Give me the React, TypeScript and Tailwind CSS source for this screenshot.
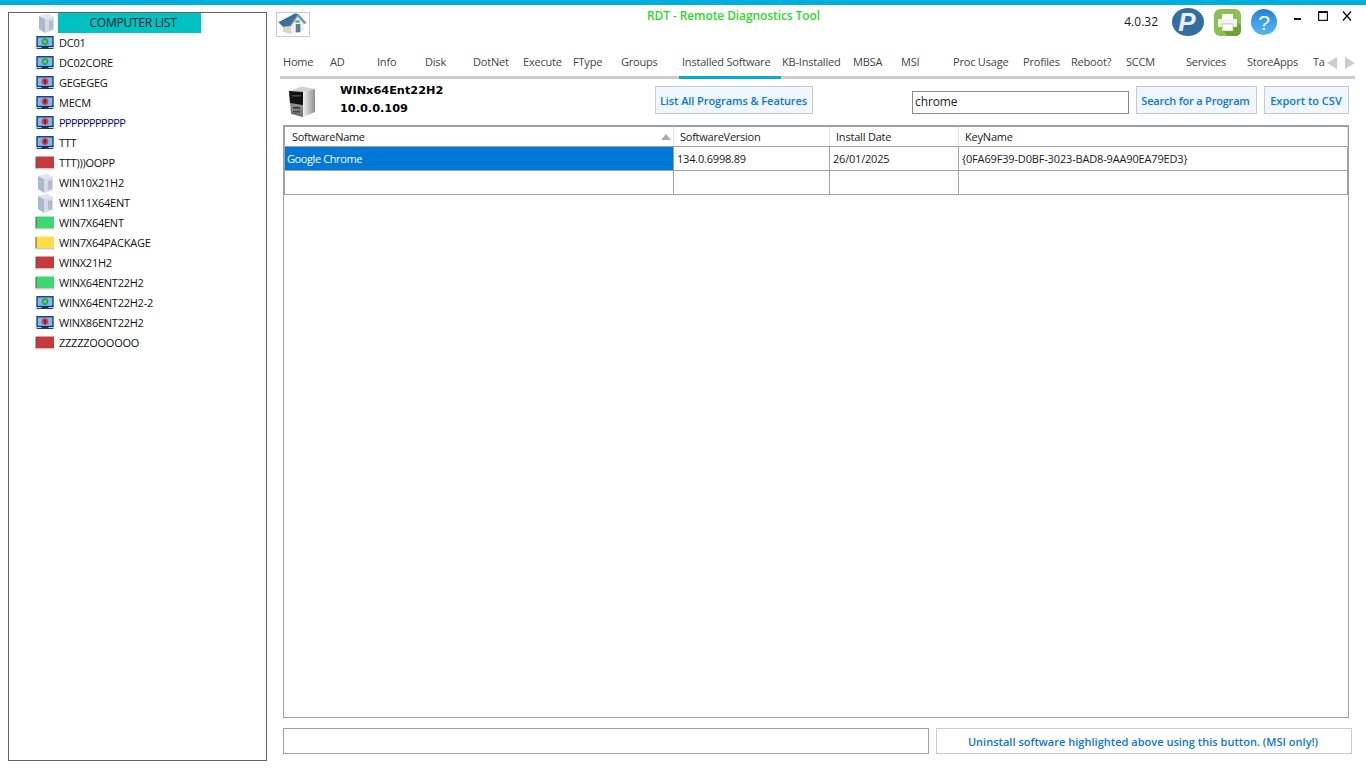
import React from "react";

type Kind = "ok" | "bad" | "server" | "red" | "green" | "yellow";

const items: [string, Kind][] = [
  ["DC01", "ok"],
  ["DC02CORE", "ok"],
  ["GEGEGEG", "bad"],
  ["MECM", "bad"],
  ["PPPPPPPPPPP", "bad"],
  ["TTT", "bad"],
  ["TTT)))OOPP", "red"],
  ["WIN10X21H2", "server"],
  ["WIN11X64ENT", "server"],
  ["WIN7X64ENT", "green"],
  ["WIN7X64PACKAGE", "yellow"],
  ["WINX21H2", "red"],
  ["WINX64ENT22H2", "green"],
  ["WINX64ENT22H2-2", "ok"],
  ["WINX86ENT22H2", "bad"],
  ["ZZZZZOOOOOO", "red"],
];

const tabs: [string, number][] = [
  ["Home", 47],
  ["AD", 47],
  ["Info", 48],
  ["Disk", 48],
  ["DotNet", 50],
  ["Execute", 50],
  ["FType", 48],
  ["Groups", 61],
  ["Installed Software", 102],
  ["KB-Installed", 71],
  ["MBSA", 48],
  ["MSI", 52],
  ["Proc Usage", 70],
  ["Profiles", 48],
  ["Reboot?", 55],
  ["SCCM", 60],
  ["Services", 61],
  ["StoreApps", 66],
];

function Server() {
  return (
    <svg width="20" height="20" viewBox="0 0 20 20">
      <path d="M3 3 L12 0.5 L18 4 L9 6 Z" fill="#e2e5ee" />
      <path d="M3 3 L9 6 L9 20 L3 16 Z" fill="#a9b9d3" />
      <path d="M9 6 L18 4 L18 17 L9 20 Z" fill="#d6dae4" />
      <path d="M13 8 L17 7 L17 16 L13 17 Z" fill="#b4bccb" />
    </svg>
  );
}

function Laptop({ ok }: { ok: boolean }) {
  return (
    <svg width="20" height="14" viewBox="0 0 20 14">
      <rect x="2" y="0.75" width="16" height="9.75" fill="#79bdf4" stroke="#14306a" strokeWidth="1.3" />
      <rect x="0" y="11" width="20" height="2" fill="#a6e3fa" />
      <rect x="2" y="12" width="16" height="1" fill="#1c3a78" />
      <rect x="6.5" y="10" width="7" height="2" fill="#14306a" />
      <circle cx="10" cy="5.6" r="3.4" fill={ok ? "#2f9e3c" : "#e0383f"} />
      {ok ? (
        <path d="M8.5 4.3 L11.5 7 M11.5 4.3 L8.5 7" stroke="#b8f0a8" strokeWidth="0.9" />
      ) : (
        <path d="M10 3.6 V7.6" stroke="#2a1010" strokeWidth="1.2" />
      )}
    </svg>
  );
}

function Block({ color }: { color: string }) {
  return (
    <svg width="20" height="14" viewBox="0 0 20 14">
      <rect x="1" y="0.5" width="18" height="11.5" fill={color} />
      <rect x="0.5" y="1" width="1" height="11.5" fill="#55554f" />
      <rect x="0.5" y="12" width="19" height="1.5" fill="#cfcdc2" />
    </svg>
  );
}

function NodeIcon({ kind }: { kind: Kind }) {
  if (kind === "ok") return <Laptop ok />;
  if (kind === "bad") return <Laptop ok={false} />;
  if (kind === "server") return <Server />;
  if (kind === "red") return <Block color="#c43a3e" />;
  if (kind === "green") return <Block color="#3fd672" />;
  return <Block color="#ffdf45" />;
}

function HomeIcon() {
  return (
    <svg width="34" height="25" viewBox="0 0 34 25" className="border border-[#c8c8c8]">
      <path d="M6 12 L6 20 L15 23 L15 12 Z" fill="#d8d4ca" />
      <path d="M15 12 L22 4 L29 11 L29 19 L15 23 Z" fill="#f1efe9" />
      <path d="M1 10 L19 0.5 L23 1 L14 14 L6 15 Z" fill="#3d7098" />
      <path d="M23 1 L32 11 L29 12 L22 4 L15 14 L14 14 Z" fill="#6a9cc0" />
      <rect x="20" y="12" width="5" height="9" fill="#5a7d96" />
      <rect x="19.5" y="8" width="5" height="2.5" fill="#5fb36a" />
    </svg>
  );
}

function TowerIcon() {
  return (
    <svg width="28" height="32" viewBox="0 0 28 32">
      <defs>
        <linearGradient id="sideg" x1="0" y1="0" x2="1" y2="0">
          <stop offset="0" stopColor="#f2f2f2" />
          <stop offset="1" stopColor="#8f8f8f" />
        </linearGradient>
        <linearGradient id="frontg" x1="0" y1="0" x2="0" y2="1">
          <stop offset="0" stopColor="#b8b8b8" />
          <stop offset="1" stopColor="#6a6a6a" />
        </linearGradient>
      </defs>
      <path d="M1 5 L14 0.5 L27 3 L15 6 Z" fill="#d0d0d0" />
      <path d="M15 6 L27 3 V26 L15 31 Z" fill="url(#sideg)" />
      <path d="M1 5 L15 6 V31 L3 28 Z" fill="url(#frontg)" />
      <path d="M1 5 L15 6 V19 L2 17 Z" fill="#111111" />
      <rect x="4" y="9" width="9" height="1.5" fill="#444" />
      <rect x="5" y="21" width="7" height="1.5" fill="#333" />
      <rect x="5" y="25" width="7" height="1.5" fill="#444" />
    </svg>
  );
}

function PaypalIcon() {
  return (
    <svg width="32" height="28" viewBox="0 0 32 28">
      <ellipse cx="16" cy="14" rx="16" ry="14" fill="#356da3" />
      <text x="15" y="23" textAnchor="middle" fontFamily="'Liberation Sans', sans-serif" fontSize="26" fontWeight="700" fontStyle="italic" fill="#e8f0f8">P</text>
    </svg>
  );
}

function PrinterIcon() {
  return (
    <svg width="27" height="27" viewBox="0 0 27 27">
      <rect width="27" height="27" rx="6" fill="#8cc152" />
      <path d="M21 11 L27 17 V21 Q27 27 21 27 H14 L8 21 Z" fill="#6f9f3f" />
      <rect x="8" y="5" width="11" height="6" fill="#fff" />
      <rect x="4" y="10" width="19" height="8" rx="1" fill="#f2f2f2" />
      <rect x="8" y="15" width="11" height="7" fill="#fff" stroke="#8cc152" strokeWidth="0.6" />
    </svg>
  );
}

function HelpIcon() {
  return (
    <svg width="26" height="26" viewBox="0 0 26 26">
      <defs>
        <linearGradient id="helpg" x1="0" y1="0" x2="0" y2="1">
          <stop offset="0" stopColor="#1f7fd6" />
          <stop offset="0.5" stopColor="#3f9fe8" />
          <stop offset="1" stopColor="#58b4f2" />
        </linearGradient>
      </defs>
      <circle cx="13" cy="13" r="13" fill="url(#helpg)" />
      <text x="13" y="20.5" textAnchor="middle" fontFamily="'Liberation Sans', sans-serif" fontSize="21" fill="#ffffff">?</text>
    </svg>
  );
}

const actionBtn =
  "h-[28px] flex items-center justify-center border border-[#c8ccd0] bg-[#eff6fd] text-[#0a76d6] font-semibold text-[11px]";

export default function App() {
  return (
    <div className="w-[1366px] h-[768px] overflow-hidden bg-white flex flex-col font-['Open_Sans','Noto_Sans',sans-serif] text-[12px] text-[#1a1a1a] leading-none">
      <div className="h-[5px] bg-[#00aedb] shrink-0" />
      <div className="flex flex-1 min-h-0">
        {/* left tree */}
        <div className="w-[267px] shrink-0 pl-[8px] pt-[7px]">
          <div className="w-[259px] h-[749px] border border-[#646464]">
            <div className="h-[20px] flex items-center">
              <div className="w-[49px] flex justify-end pr-[1px]">
                <div className="mr-[1px]"><Server /></div>
              </div>
              <div className="w-[143px] h-[20px] bg-[#00c2c2] flex items-center justify-center pl-[7px] text-[#10202a] tracking-[-0.25px]">
                COMPUTER LIST
              </div>
            </div>
            {items.map(([name, kind]) => (
              <div key={name} className="h-[20px] flex items-center">
                <div className="w-[26px] ml-[26px] mr-[-2px] shrink-0 flex items-center">
                  <NodeIcon kind={kind} />
                </div>
                <span className={name.startsWith("PPP") ? "text-[#000080] text-[11px] tracking-[-0.6px] mb-[2px]" : "text-[#101010] text-[11px] tracking-[-0.25px] mb-[2px]"}>{name}</span>
              </div>
            ))}
          </div>
        </div>

        {/* right column */}
        <div className="flex-1 min-w-0 flex flex-col">
          {/* header */}
          <div className="h-[47px] shrink-0 relative flex items-start pl-[9px]">
            <div className="mt-[7px]"><HomeIcon /></div>
            <div className="absolute left-[380px] top-[5px] text-[#33d62a] font-semibold text-[12px] tracking-[-0.1px]">
              RDT - Remote Diagnostics Tool
            </div>
            <div className="ml-auto flex items-start">
              <span className="mt-[11px] mr-[14px] text-[12px]">4.0.32</span>
              <div className="mt-[3px] mr-[10px]"><PaypalIcon /></div>
              <div className="mt-[4px] mr-[10px]"><PrinterIcon /></div>
              <div className="mt-[4px] mr-[17px]"><HelpIcon /></div>
              <svg width="58" height="10" viewBox="0 0 58 10" className="mt-[6px] mr-[14px]">
                <rect x="0" y="7" width="7" height="2" fill="#111" />
                <rect x="24.6" y="0.6" width="8.8" height="8.8" fill="none" stroke="#111" strokeWidth="1.2" />
                <rect x="24" y="0" width="10" height="2" fill="#111" />
                <path d="M49 0.5 L57 9.5 M57 0.5 L49 9.5" stroke="#111" strokeWidth="1.4" />
              </svg>
            </div>
          </div>

          {/* tabs */}
          <div className="ml-[13px] w-[1075px] h-[27px] shrink-0 border-b-[3px] border-[#cccccc] flex items-start text-[11px] tracking-[-0.2px] text-[#444]">
            {tabs.map(([name, w]) => (
              <div
                key={name}
                style={{ width: w }}
                className={
                  name === "Installed Software"
                    ? "h-[27px] shrink-0 pl-[3px] pt-[4px] mr-[-2px] whitespace-nowrap border-b-[3px] border-[#00aedb] relative"
                    : "h-[24px] shrink-0 pl-[3px] pt-[4px] whitespace-nowrap"
                }
              >
                {name}
              </div>
            ))}
            <div className="h-[24px] pl-[3px] pt-[4px] w-[14px] shrink-0">Ta</div>
            <div className="h-[21px] flex items-center gap-[8px] pl-[3px]">
              <svg width="10" height="12" viewBox="0 0 10 12"><path d="M10 0 V12 L0 6 Z" fill="#cccccc" /></svg>
              <svg width="10" height="12" viewBox="0 0 10 12"><path d="M0 0 V12 L10 6 Z" fill="#cccccc" /></svg>
            </div>
          </div>

          {/* info row */}
          <div className="h-[46px] shrink-0 flex items-start">
            <div className="ml-[21px] mt-[7px] w-[52px]"><TowerIcon /></div>
            <div className="w-[315px] mt-[3px] font-bold text-black font-['DejaVu_Sans',sans-serif] text-[11.3px]">
              <div className="h-[18px] flex items-center">WINx64Ent22H2</div>
              <div className="h-[18px] flex items-center">10.0.0.109</div>
            </div>
            <div className={`${actionBtn} w-[158px] mt-[7px] tracking-[-0.08px] pr-[1px]`}>List All Programs &amp; Features</div>
            <div className="ml-[99px] mt-[12px] w-[217px] h-[23px] border border-[#8a8a8a] flex items-center pl-[2px] pb-[2px] text-[12px] text-[#222] tracking-[-0.1px]">
              chrome
            </div>
            <div className={`${actionBtn} w-[121px] mt-[7px] ml-[7px] tracking-[-0.2px] pr-[2px]`}>Search for a Program</div>
            <div className={`${actionBtn} w-[85px] mt-[7px] ml-[7px] pr-[1px]`}>Export to CSV</div>
          </div>

          {/* grid */}
          <div className="ml-[16px] w-[1066px] h-[593px] shrink-0 border border-[#a0a0a0] border-t-[2px] text-[11px] tracking-[-0.2px]">
            <div className="flex h-[20px] text-[#1a1a1a] border-b border-l border-r border-[#a0a0a0] border-r-[#dddddd] bg-white">
              <div className="w-[389px] pl-[7px] flex items-center relative border-r border-[#e4e4e4] tracking-[-0.3px]">
                SoftwareName
                <svg width="10" height="6" viewBox="0 0 10 6" className="absolute right-[2px] top-[7px]"><path d="M5 0 L10 6 H0 Z" fill="#aaaaaa" /></svg>
              </div>
              <div className="w-[156px] pl-[6px] flex items-center border-r border-[#e4e4e4] tracking-[-0.25px]">SoftwareVersion</div>
              <div className="w-[129px] pl-[6px] flex items-center border-r border-[#e4e4e4]">Install Date</div>
              <div className="flex-1 pl-[6px] flex items-center">KeyName</div>
            </div>
            <div className="flex h-[24px] text-[#1a1a1a] border-b border-l border-r border-[#a0a0a0]">
              <div className="w-[389px] pl-[2px] flex items-center bg-[#0078d7] text-white border-r border-[#a0a0a0] tracking-[-0.4px]">Google Chrome</div>
              <div className="w-[156px] pl-[3px] flex items-center border-r border-[#a0a0a0]">134.0.6998.89</div>
              <div className="w-[129px] pl-[3px] flex items-center border-r border-[#a0a0a0]">26/01/2025</div>
              <div className="flex-1 pl-[3px] flex items-center tracking-[-0.16px]">{"{0FA69F39-D0BF-3023-BAD8-9AA90EA79ED3}"}</div>
            </div>
            <div className="flex h-[24px] border-b border-l border-r border-[#a0a0a0]">
              <div className="w-[389px] border-r border-[#a0a0a0]" />
              <div className="w-[156px] border-r border-[#a0a0a0]" />
              <div className="w-[129px] border-r border-[#a0a0a0]" />
              <div className="flex-1" />
            </div>
          </div>

          {/* bottom */}
          <div className="flex ml-[16px] mt-[10px]">
            <div className="w-[646px] h-[26px] border border-[#a0a0a0]" />
            <div className="ml-[7px] w-[416px] h-[26px] border border-[#cccccc] flex items-center justify-center pr-[2px] text-[#0a76d6] font-semibold text-[11px] tracking-[0.02px]">
              Uninstall software highlighted above using this button. (MSI only!)
            </div>
          </div>
        </div>
      </div>
    </div>
  );
}
